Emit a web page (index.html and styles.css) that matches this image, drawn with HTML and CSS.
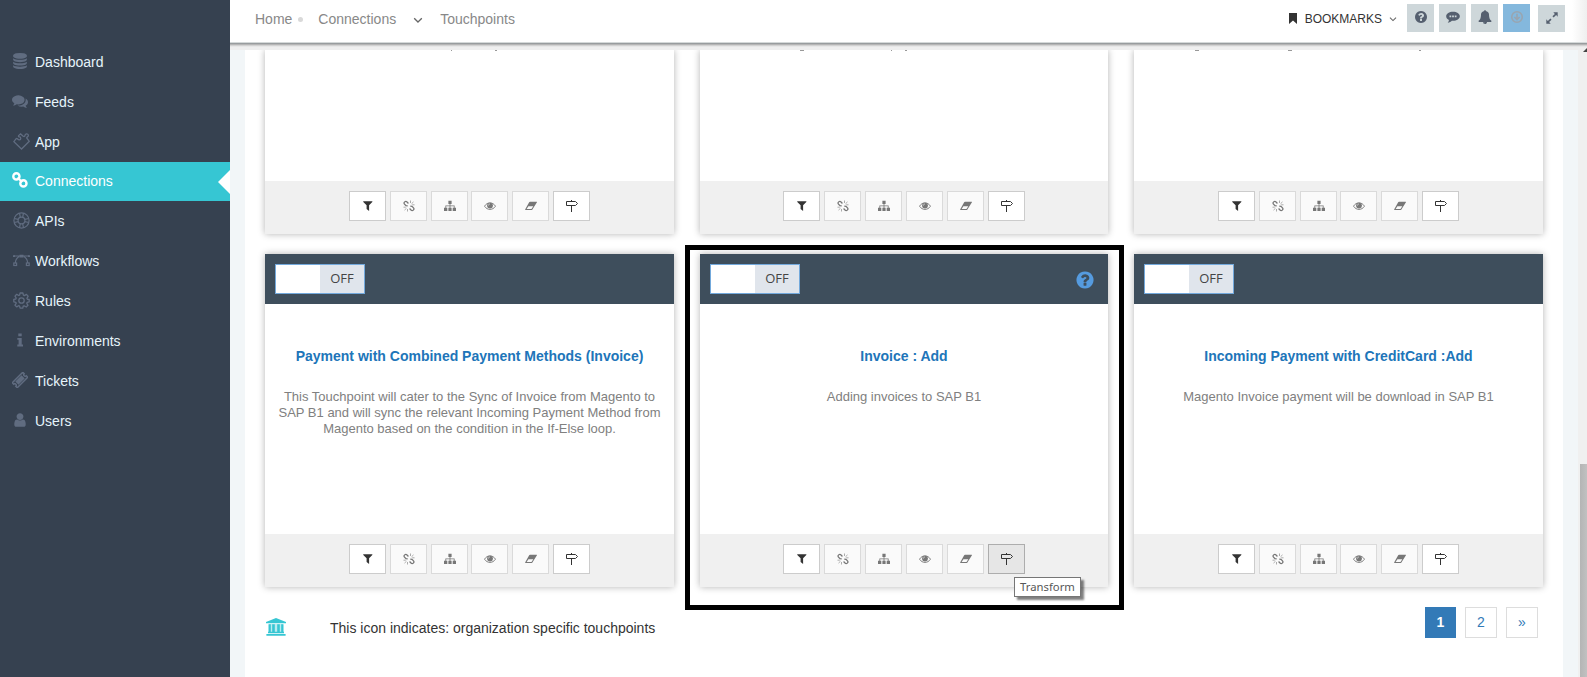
FILE: index.html
```
<!DOCTYPE html>
<html lang="en">
<head>
<meta charset="utf-8">
<title>Touchpoints</title>
<link rel="stylesheet" href="styles.css">
</head>
<body>
<svg class="defs" width="0" height="0">
  <symbol id="database" viewBox="0 0 1792 1792"><path d="M896 768q237 0 443-43t325-127v170q0 69-103 128t-280 93.500-385 34.500-385-34.500-280-93.500-103-128v-170q119 84 325 127t443 43zm0 768q237 0 443-43t325-127v170q0 69-103 128t-280 93.500-385 34.500-385-34.500-280-93.500-103-128v-170q119 84 325 127t443 43zm0-384q237 0 443-43t325-127v170q0 69-103 128t-280 93.500-385 34.500-385-34.500-280-93.500-103-128v-170q119 84 325 127t443 43zm0-1152q208 0 385 34.500t280 93.500 103 128v128q0 69-103 128t-280 93.500-385 34.500-385-34.500-280-93.500-103-128v-128q0-69 103-128t280-93.500 385-34.500z"/></symbol>
  <symbol id="comments" viewBox="0 0 1792 1792"><path d="M1408 768q0 139-94 257t-256.500 186.500-353.500 68.500q-86 0-176-16-124 88-278 128-36 9-86 16h-3q-11 0-20.500-8t-11.500-21q-1-3-1-6.500t.5-6.500 2-6l2.500-5 3.500-5.500 4-5 4.500-5 4-4.500q5-6 23-25t26-29.500 22.500-29 25-38.500 20.500-44q-124-72-195-177t-71-224q0-139 94-257t256.500-186.500 353.500-68.500 353.500 68.500 256.500 186.500 94 257zm384 256q0 120-71 224.500t-195 176.500q10 24 20.500 44t25 38.500 22.500 29 26 29.500 23 25q1 1 4 4.500t4.500 5 4 5 3.500 5.500l2.500 5 2 6 .5 6.500-1 6.500q-3 14-13 22t-22 7q-50-7-86-16-154-40-278-128-90 16-176 16-271 0-472-132 58 4 88 4 161 0 309-45t264-129q125-92 192-212t67-254q0-77-23-152 129 71 204 178t75 230z"/></symbol>
  <symbol id="puzzle" viewBox="0 0 17 17"><path fill="none" stroke="currentColor" stroke-width="1.300" d="M8.500 16L.9 8.600l2.200-2.900c1.300-1.100 1.600 1.500 3.300 1.200 1.900-.4 1.700-2.800 0-3-1.500-.2-1-1.300-.2-1.900L7.600.9l2.600 2.400c1.300.9 1.700-.3 1.800-1.100.5-1.900 3.400-1.700 3.400.3 0 1.400-1.900 1.400-1.700 2.500l2.600 3.300z"/></symbol>
  <symbol id="link" viewBox="0 0 16 16"><g fill="none" stroke="currentColor" stroke-width="2.400"><circle cx="4.400" cy="4.400" r="3.100"/><circle cx="11.400" cy="11.400" r="3.100"/><path stroke-width="2" d="M5.500 5.500l4.800 4.800"/></g></symbol>
  <symbol id="ring" viewBox="0 0 17 17"><g fill="none" stroke="currentColor" stroke-width="1.200"><circle cx="8.500" cy="8.500" r="7.600"/><circle cx="8.500" cy="8.500" r="3.400"/><path d="M6.500 1.200l.8 4M10.500 1.200l-.8 4M6.500 15.800l.8-4M10.500 15.800l-.8-4M1.200 6.500l4 .8M1.200 10.500l4-.8M15.800 6.500l-4 .8M15.800 10.500l-4-.8"/></g></symbol>
  <symbol id="vector" viewBox="0 0 17 17"><g fill="none" stroke="currentColor" stroke-width="1.200"><path d="M1 4h15M6.200 4.500C3.500 6 2.500 8 2.300 11M10.800 4.500c2.700 1.500 3.700 3.500 3.900 6.500"/><rect x=".8" y="11" width="2.800" height="2.500"/><rect x="13.400" y="11" width="2.800" height="2.500"/></g><path d="M6.500 2.800h4v2.600h-4zM0 3.200h2v1.700H0zM15 3.200h2v1.700h-2z"/></symbol>
  <symbol id="gear" viewBox="0 0 17 17"><g fill="none" stroke="currentColor" stroke-width="1.300" stroke-linejoin="round"><circle cx="8.500" cy="8.500" r="2.700"/><path d="M7.100 1h2.800l.5 2.200 1 .4 2-1.200 1.700 1.900-1.200 2 .5 1L16.200 7.500v2.300l-2 .5-.4 1 1.200 2-1.800 1.700-2-1.200-1 .4-.4 1.900H7.100l-.5-2-1-.4-1.900 1.200L2 13.200l1.200-1.900-.4-1-2-.5V7.400l2-.4.4-1L2 4.100l1.700-1.800 1.900 1.200 1-.4z"/></g></symbol>
  <symbol id="info" viewBox="0 0 16 16"><path d="M6.300 1.500h3.400v2.800H6.300zM5.300 6h4.400v6.500H11v1.900H5.300v-1.900h1.300V7.800H5.300z"/></symbol>
  <symbol id="ticket" viewBox="0 0 16 16"><g transform="rotate(-45 8 8)"><path fill="none" stroke="currentColor" stroke-width="1.500" d="M.6 4.500h14.800v2a1.500 1.500 0 0 0 0 3v2H.6v-2a1.500 1.500 0 0 0 0-3z"/><path d="M3.600 5.800h8.800v4.400H3.600z"/></g></symbol>
  <symbol id="user" viewBox="0 0 1792 1792"><path d="M1536 1399q0 109-62.500 187t-150.500 78h-854q-88 0-150.500-78t-62.500-187q0-85 8.500-160.500t31.500-152 58.500-131 94-89 134.500-34.500q131 128 313 128t313-128q76 0 134.500 34.500t94 89 58.500 131 31.500 152 8.500 160.500zm-256-887q0 159-112.500 271.500t-271.500 112.500-271.500-112.500-112.500-271.500 112.500-271.500 271.500-112.500 271.500 112.500 112.500 271.500z"/></symbol>
  <symbol id="question" viewBox="0 0 1792 1792"><path d="M1024 1376v-192q0-14-9-23t-23-9h-192q-14 0-23 9t-9 23v192q0 14 9 23t23 9h192q14 0 23-9t9-23zm256-672q0-88-55.500-163t-138.500-116-170-41q-243 0-371 213-15 24 8 42l132 100q7 6 19 6 16 0 25-12 53-68 86-92 34-24 86-24 48 0 85.500 26t37.500 59q0 38-20 61t-68 45q-63 28-115.500 86.500t-52.500 125.500v36q0 14 9 23t23 9h192q14 0 23-9t9-23q0-19 21.500-49.500t54.500-49.500q32-18 49-28.500t46-35 44.500-48 28-60.500 12.500-81zm384 192q0 209-103 385.500t-279.500 279.500-385.500 103-385.500-103-279.500-279.500-103-385.500 103-385.500 279.500-279.500 385.500-103 385.500 103 279.500 279.500 103 385.500z"/></symbol>
  <symbol id="bubble" viewBox="0 0 16 16"><path fill-rule="evenodd" d="M8 2c4.300 0 7.800 2.300 7.800 5.200s-3.500 5.200-7.800 5.200l-1.300-.1C5.500 13.600 4 14.300 2 14.500c.8-.9 1.200-1.900 1.400-3.100C1.400 10.500.2 9 .2 7.200.2 4.300 3.700 2 8 2zM4 6.200v2h2v-2zm3 0v2h2v-2zm3 0v2h2v-2z"/></symbol>
  <symbol id="bell" viewBox="0 0 1792 1792"><path d="M912 1696q0-16-16-16-59 0-101.500-42.500t-42.500-101.500q0-16-16-16t-16 16q0 73 51.500 124.500t124.500 51.500q16 0 16-16zm816-288q0 52-38 90t-90 38h-448q0 106-75 181t-181 75-181-75-75-181h-448q-52 0-90-38t-38-90q50-42 91-88t85-119.500 74.500-158.500 50-206 19.500-260q0-152 117-282.500t307-158.500q-8-19-8-39 0-40 28-68t68-28 68 28 28 68q0 20-8 39 190 28 307 158.500t117 282.500q0 139 19.500 260t50 206 74.500 158.500 85 119.500 91 88z"/></symbol>
  <symbol id="down" viewBox="0 0 16 16"><g fill="none" stroke="currentColor" stroke-width="1.800"><circle cx="8" cy="8" r="6"/><path d="M8 4.300v6.500M5 8l3 3 3-3"/></g></symbol>
  <symbol id="expand" viewBox="0 0 16 16"><path d="M9.500 1.500h5v5l-1.800-1.800L9.900 7.500 8.500 6.100l2.800-2.800zM1.500 9.500l1.800 1.800L6.100 8.500l1.400 1.400-2.800 2.800 1.800 1.800h-5z"/></symbol>
  <symbol id="chevron" viewBox="0 0 10 10"><path fill="none" stroke="currentColor" stroke-width="1.300" d="M1.200 3.200L5 7l3.800-3.800"/></symbol>
  <symbol id="bookmark" viewBox="0 0 8 11"><path d="M0 0h8v11L4 7.400 0 11z"/></symbol>
  <symbol id="filter" viewBox="0 0 12 12"><path d="M1.500 1.300h8.600c.4 0 .5.300.2.700L7.100 5.300V11L4.600 9V5.300L1.300 2c-.3-.4-.2-.7.200-.7z"/></symbol>
  <symbol id="unlink" viewBox="0 0 12 12"><g fill="none" stroke="currentColor" stroke-width="1.300"><path d="M5.400 3.500L4 1.900C2.500.5.200 2.500 1.500 4.100L3 5.700l1.700.2M6.600 8.500L8 10.100c1.500 1.400 3.800-.6 2.500-2.200L9 6.300l-1.700-.2"/><path stroke-width=".6" d="M7.500 3V.5M8.500 3.800l2-1.900M9.200 4.800h2.300M4.500 9v2.500M3.500 8.200l-2 1.900M2.800 7.200H.5"/></g></symbol>
  <symbol id="sitemap" viewBox="0 0 12 12"><path d="M4.400.7h3.200v3.200H6.400v1.500h4.200v2.400H12V11H8.700V7.800h1.100V6.200H6.400v1.600h1.200V11H4.400V7.800h1.200V6.200H2.200v1.600h1.100V11H0V7.800h1.400V5.400h4.200V3.900H4.400z"/></symbol>
  <symbol id="eye" viewBox="0 0 12 12"><path fill="none" stroke="currentColor" stroke-width=".9" d="M.5 6.200C3.300 1.700 8.700 1.700 11.500 6.200 8.700 10.500 3.300 10.500.5 6.200z"/><circle cx="6" cy="5.600" r="2.900"/><path fill="none" stroke="#fafafa" stroke-width=".6" d="M4.400 5.600c0-1 .6-1.600 1.600-1.600"/></symbol>
  <symbol id="eraser" viewBox="0 0 13 12"><path fill-rule="evenodd" d="M5.400 1.500h7c.5 0 .7.400.4.800L8 9.800c-.2.400-.5.600-.9.600H.7c-.5 0-.7-.4-.4-.8L4.500 2c.2-.3.500-.5.900-.5zM3.700 6.200L1.800 9.300H7l2-3.100z"/></symbol>
  <symbol id="sign" viewBox="0 0 12 12"><path fill="none" stroke="currentColor" d="M.5 1.500h9l2 2-2 2h-9zM5.500 0v1.500M5.500 5.500V12"/></symbol>
  <symbol id="bank" viewBox="0 0 20 18"><path d="M10 0l10 4v1.200H0V4z"/><path opacity=".35" d="M3 6h14v8H3z"/><path d="M2.500 6.200h2.300v7.600h1.400V6.200h2.600v7.600h2.400V6.200h2.600v7.600h1.400V6.200h2.300v7.600h.5v1.400H2v-1.400h.5zM.4 16h19.200v1.700H.4z"/></symbol>
</svg>

<div class="app">
  <nav class="sidebar">
    <a class="item"><svg class="ico"><use href="#database"/></svg>Dashboard</a>
    <a class="item"><svg class="ico"><use href="#comments"/></svg>Feeds</a>
    <a class="item"><svg class="ico wide"><use href="#puzzle"/></svg>App</a>
    <a class="item active"><svg class="ico"><use href="#link"/></svg>Connections</a>
    <a class="item"><svg class="ico wide"><use href="#ring"/></svg>APIs</a>
    <a class="item"><svg class="ico wide"><use href="#vector"/></svg>Workflows</a>
    <a class="item"><svg class="ico wide"><use href="#gear"/></svg>Rules</a>
    <a class="item"><svg class="ico"><use href="#info"/></svg>Environments</a>
    <a class="item"><svg class="ico"><use href="#ticket"/></svg>Tickets</a>
    <a class="item"><svg class="ico"><use href="#user"/></svg>Users</a>
  </nav>

  <div class="main">
    <header class="topbar">
      <div class="crumbs">
        <span>Home</span><i class="dot"></i><span>Connections</span><svg class="crumb-arrow"><use href="#chevron"/></svg><span>Touchpoints</span>
      </div>
      <div class="tools">
        <svg class="mark"><use href="#bookmark"/></svg><span class="bookmarks">BOOKMARKS</span><svg class="mark-arrow"><use href="#chevron"/></svg>
        <span class="tool"><svg><use href="#question"/></svg></span>
        <span class="tool"><svg><use href="#bubble"/></svg></span>
        <span class="tool"><svg><use href="#bell"/></svg></span>
        <span class="tool blue"><svg><use href="#down"/></svg></span>
        <span class="tool last"><svg><use href="#expand"/></svg></span>
      </div>
    </header>
    <div class="edge"></div>

    <div class="viewport">
      <div class="page">
        <div class="cards">
          <article class="card cut">
            <div class="body"><svg class="tails" viewBox="0 0 409 1"><path d="M186 0h1v1h-1zM230 0h2v1h-2z"/></svg></div>
            <footer class="foot"><span class="btn"><svg><use href="#filter"/></svg></span><span class="btn off"><svg><use href="#unlink"/></svg></span><span class="btn off"><svg><use href="#sitemap"/></svg></span><span class="btn off"><svg><use href="#eye"/></svg></span><span class="btn off"><svg><use href="#eraser"/></svg></span><span class="btn"><svg><use href="#sign"/></svg></span></footer>
          </article>
          <article class="card cut">
            <div class="body"><svg class="tails" viewBox="0 0 409 1"><path d="M100 0h4v1h-4zM191 0h1v1h-1zM205 0h2v1h-2z"/></svg></div>
            <footer class="foot"><span class="btn"><svg><use href="#filter"/></svg></span><span class="btn off"><svg><use href="#unlink"/></svg></span><span class="btn off"><svg><use href="#sitemap"/></svg></span><span class="btn off"><svg><use href="#eye"/></svg></span><span class="btn off"><svg><use href="#eraser"/></svg></span><span class="btn"><svg><use href="#sign"/></svg></span></footer>
          </article>
          <article class="card cut">
            <div class="body"><svg class="tails" viewBox="0 0 409 1"><path d="M61 0h4v1h-4zM154 0h4v1h-4zM285 0h2v1h-2z"/></svg></div>
            <footer class="foot"><span class="btn"><svg><use href="#filter"/></svg></span><span class="btn off"><svg><use href="#unlink"/></svg></span><span class="btn off"><svg><use href="#sitemap"/></svg></span><span class="btn off"><svg><use href="#eye"/></svg></span><span class="btn off"><svg><use href="#eraser"/></svg></span><span class="btn"><svg><use href="#sign"/></svg></span></footer>
          </article>

          <article class="card">
            <div class="head"><div class="switch"><span class="knob"></span><span class="label">OFF</span></div></div>
            <div class="body"><h3>Payment with Combined Payment Methods (Invoice)</h3><p>This Touchpoint will cater to the Sync of Invoice from Magento to<br>SAP B1 and will sync the relevant Incoming Payment Method from<br>Magento based on the condition in the If-Else loop.</p></div>
            <footer class="foot"><span class="btn"><svg><use href="#filter"/></svg></span><span class="btn off"><svg><use href="#unlink"/></svg></span><span class="btn off"><svg><use href="#sitemap"/></svg></span><span class="btn off"><svg><use href="#eye"/></svg></span><span class="btn off"><svg><use href="#eraser"/></svg></span><span class="btn"><svg><use href="#sign"/></svg></span></footer>
          </article>
          <article class="card">
            <div class="head"><div class="switch"><span class="knob"></span><span class="label">OFF</span></div><svg class="help"><use href="#question"/></svg></div>
            <div class="body"><h3>Invoice : Add</h3><p>Adding invoices to SAP B1</p></div>
            <footer class="foot"><span class="btn"><svg><use href="#filter"/></svg></span><span class="btn off"><svg><use href="#unlink"/></svg></span><span class="btn off"><svg><use href="#sitemap"/></svg></span><span class="btn off"><svg><use href="#eye"/></svg></span><span class="btn off"><svg><use href="#eraser"/></svg></span><span class="btn hover"><svg><use href="#sign"/></svg></span></footer>
            <div class="frame"></div>
            <div class="tooltip">Transform</div>
          </article>
          <article class="card">
            <div class="head"><div class="switch"><span class="knob"></span><span class="label">OFF</span></div></div>
            <div class="body"><h3>Incoming Payment with CreditCard :Add</h3><p>Magento Invoice payment will be download in SAP B1</p></div>
            <footer class="foot"><span class="btn"><svg><use href="#filter"/></svg></span><span class="btn off"><svg><use href="#unlink"/></svg></span><span class="btn off"><svg><use href="#sitemap"/></svg></span><span class="btn off"><svg><use href="#eye"/></svg></span><span class="btn off"><svg><use href="#eraser"/></svg></span><span class="btn"><svg><use href="#sign"/></svg></span></footer>
          </article>
        </div>
        <div class="legend">
          <svg class="bank"><use href="#bank"/></svg>
          <span class="note">This icon indicates: organization specific touchpoints</span>
          <div class="pager"><a class="pg on">1</a><a class="pg">2</a><a class="pg">»</a></div>
        </div>
      </div>
      <div class="scroll"><svg class="up" viewBox="0 0 4 4"><path d="M0 4l4-4v4z"/></svg><div class="thumb"></div></div>
    </div>
  </div>
</div>
</body>
</html>
```
FILE: styles.css
```
* { box-sizing: border-box; }
body { margin: 0; font-family: "Liberation Sans", Arial, sans-serif; font-size: 14px; color: #333; background: #fff; overflow: hidden; }
svg { display: block; fill: currentColor; }
.defs { position: absolute; }
.app { display: flex; width: 1587px; height: 677px; overflow: hidden; }

.sidebar { width: 230px; flex: none; background: #364150; padding-top: 42px; }
.item { display: flex; align-items: center; position: relative; height: 40px; padding-left: 12px; color: #e6f4fb; }
.ico { width: 16px; height: 16px; margin-right: 7px; color: #606c80; position: relative; top: -1px; }
.ico.wide { width: 17px; height: 17px; margin: 0 5px 0 1px; }
.item.active { height: 39px; padding-bottom: 2px; background: #36c6d3; color: #fff; }
.item.active .ico { color: #fff; }
.item.active::after { content: ""; position: absolute; right: 0; top: 8px; border: 12px solid transparent; border-right-color: #fff; border-left: 0; }

.main { flex: 1; display: flex; flex-direction: column; min-width: 0; }
.topbar { height: 42px; flex: none; display: flex; justify-content: space-between; background: linear-gradient(90deg, #fff 1342px, #efefef); }
.crumbs { display: flex; align-items: center; height: 38px; padding-left: 25px; color: #888; }
.dot { width: 5px; height: 5px; border-radius: 50%; background: #d9d9d9; margin: 0 15px 0 6px; }
.crumb-arrow { width: 10px; height: 10px; margin: 2px 17px 0; color: #666; }
.tools { display: flex; height: 36px; align-items: center; padding-right: 22px; }
.mark { width: 8px; height: 11px; margin: 1px 8px 0 0; color: #333; }
.bookmarks { font-size: 12px; padding-top: 2px; }
.mark-arrow { width: 8px; height: 8px; margin: 2px 10px 0 7px; color: #666; }
.tool { width: 27px; height: 28px; margin-right: 5px; background: #ced7da; color: #555f6f; display: flex; justify-content: center; padding-top: 6px; }
.tool svg { width: 14px; height: 14px; }
.tool.blue { background: #84b8dd; color: #99a5b0; margin-right: 8px; }
.tool.last { height: 27px; margin: 1px 0 0; }
.edge { height: 8px; flex: none; background: linear-gradient(#d5d9d9 0 1px, #989c9e 1px 2px, #b5b5b5 2px 3px, #d2d2d2 3px 4px, #e7e7e7 4px 5px, #efefef 5px); }

.viewport { flex: 1; display: flex; padding-left: 15px; background: #f2f6f8; min-height: 0; }
.page { width: 1318px; padding-left: 20px; background: #fff; overflow: hidden; }
.cards { display: grid; grid-template-columns: 409px 408px 409px; column-gap: 26px; row-gap: 20px; }
.card { position: relative; display: flex; flex-direction: column; height: 333px; background: #fff; box-shadow: 0 0 7px rgba(0, 0, 0, .3); }
.card.cut { height: 184px; clip-path: inset(0 -12px -12px); box-shadow: 0 -6px 0 #fff, 0 0 7px rgba(0, 0, 0, .3); }
.head { height: 50px; background: #3e4e5c; display: flex; justify-content: space-between; padding: 10px 13px 0 10px; }
.switch { display: flex; width: 90px; height: 30px; border: 1px solid #73a9dc; background: #fff; }
.knob { width: 44px; }
.label { flex: 1; background: #e0e5ec; text-align: center; font: 13px/27px "Open Sans", sans-serif; color: #444; }
.help { width: 20px; height: 20px; margin-top: 6px; color: #559bdf; }
.body { flex: 1; text-align: center; }
.tails { width: 409px; height: 1px; color: #999; }
h3 { margin: 44px 0 0; font-size: 14px; line-height: 16px; color: #2075b9; }
p { margin: 25px 0 0; font-size: 13px; line-height: 16px; color: #808080; }
.foot { height: 53px; flex: none; background: #f0f0f0; display: flex; justify-content: center; gap: 3.8px; padding-top: 10px; }
.card:nth-child(3n+2) .foot { gap: 4px; }
.btn { width: 37px; height: 30px; border: 1px solid #ccc; background: #fff; color: #333; display: flex; align-items: center; padding-left: 12px; }
.btn svg { width: 12px; height: 12px; }
.btn.off { border-color: #dadada; background: #fafafa; color: #777; }
.btn.hover { background: #e6e6e6; border-color: #adadad; }

.frame { position: absolute; left: -15px; top: -9px; width: 439px; height: 365px; border: 5px solid #000; }
.tooltip { position: absolute; left: 314px; top: 323px; width: 67px; height: 20px; border: 1px solid #767676; background: #fff; color: #575757; font: 11.300px/18px "Noto Sans", sans-serif; text-align: center; box-shadow: 3px 3px 2px rgba(0, 0, 0, .5); }

.legend { display: flex; padding-top: 20px; }
.bank { width: 20px; height: 18px; margin: 11px 44px 0 1px; color: #36c6d3; }
.note { line-height: 16px; margin-top: 13px; flex: 1; }
.pager { display: flex; gap: 9px; padding-right: 25px; }
.pg { width: 32px; height: 31px; border: 1px solid #ddd; color: #337ab7; text-align: center; line-height: 29px; }
.pg.on { width: 31px; background: #337ab7; border-color: #337ab7; color: #fff; font-weight: bold; }

.scroll { margin-left: auto; width: 9px; background: #f0f0f0; padding-left: 2px; }
.up { width: 4px; height: 4px; margin-left: 3px; color: #444; margin-top: -2px; }
.thumb { height: 300px; margin-top: 412px; background: linear-gradient(90deg, #b5b5b5, #c1c1c1); }
```
